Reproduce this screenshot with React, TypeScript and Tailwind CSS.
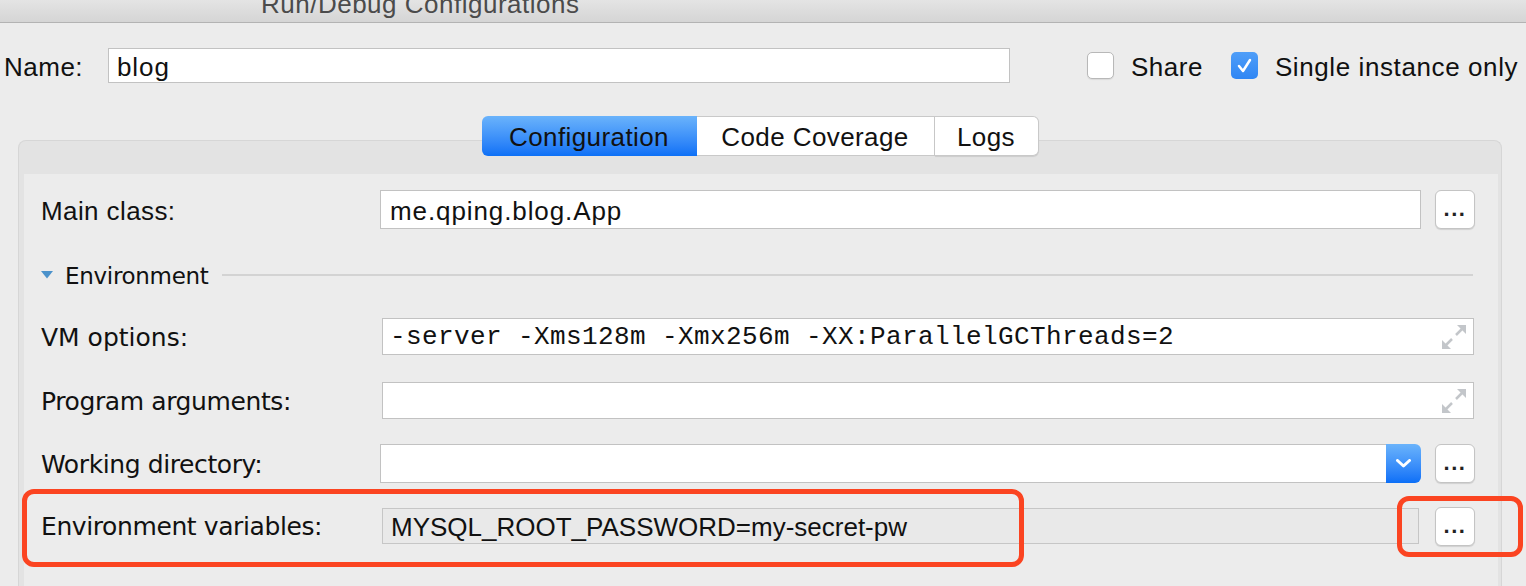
const sf = "font-['Liberation_Sans',Arial,sans-serif]";
const lucida = "font-['DejaVu_Sans',sans-serif] text-[25px] tracking-[-0.4px] text-[#111]";

function DotsButton() {
  return (
    <button className="ml-[14px] flex h-[39px] w-[40px] shrink-0 items-end justify-center rounded-[6px] border border-[#c4c4c4] bg-white pb-[8px] shadow-[0_1px_1px_rgba(0,0,0,0.12)]">
      <span className={`${sf} text-[22px] font-bold leading-none tracking-[1.5px] text-[#222]`}>...</span>
    </button>
  );
}

function ExpandIcon() {
  return (
    <svg width="24" height="24" viewBox="0 0 24 24" className="shrink-0">
      <path d="M24 0 L15 0 L24 9 Z" fill="#c3c6ca" />
      <path d="M20.5 3.5 L14 10" stroke="#c3c6ca" strokeWidth="2.5" />
      <path d="M0 24 L0 15 L9 24 Z" fill="#c3c6ca" />
      <path d="M3.5 20.5 L10 14" stroke="#c3c6ca" strokeWidth="2.5" />
    </svg>
  );
}

function Checkbox({ checked }: { checked?: boolean }) {
  if (checked) {
    return (
      <span className="flex h-[27px] w-[27px] items-center justify-center rounded-[5px] bg-gradient-to-b from-[#4f9ef8] to-[#2f86f4]">
        <svg width="27" height="27" viewBox="0 0 27 27">
          <polyline points="8,14 12,19 19,8" fill="none" stroke="white" strokeWidth="2.5" strokeLinecap="round" strokeLinejoin="round" />
        </svg>
      </span>
    );
  }
  return <span className="h-[27px] w-[27px] rounded-[5px] border border-[#b8b8b8] bg-white shadow-[0_1px_1px_rgba(0,0,0,0.08)]" />;
}

export default function App() {
  return (
    <div className="relative flex h-[586px] w-[1526px] flex-col overflow-hidden bg-[#ececec]">
      {/* window title bar */}
      <div className="h-[23px] shrink-0 overflow-hidden border-b border-[#b3b3b3] bg-gradient-to-b from-[#e4e4e4] to-[#d5d5d5] pl-[261px]">
        <div className={`${sf} -mt-[9px] text-[26px] leading-[26px] tracking-[0.5px] text-[#4b4b4b]`}>
          Run/Debug Configurations
        </div>
      </div>

      {/* name row */}
      <div className={`${sf} mt-[25px] flex h-[35px] shrink-0 items-center text-[26px] tracking-[0.5px] text-[#111]`}>
        <span className="w-[108px] pl-[4px] pt-[3px]">Name:</span>
        <div className="flex h-[35px] w-[902px] items-center border border-[#c2c2c2] bg-white pl-[8px] pt-[3px] tracking-[0.9px]">
          blog
        </div>
        <div className="ml-[77px] flex items-center">
          <Checkbox />
          <span className="ml-[17px] pt-[3px]">Share</span>
          <span className="ml-[28px]">
            <Checkbox checked />
          </span>
          <span className="ml-[17px] pt-[3px] tracking-[0.6px]">Single instance only</span>
        </div>
      </div>

      {/* tabs */}
      <div className="relative z-10 ml-[18px] mt-[33px] flex h-[40px] w-[1484px] shrink-0 justify-center">
        <div className={`${sf} flex h-[40px] text-[26px] tracking-[0.4px] text-[#111]`}>
          <div className="flex w-[215px] items-center justify-center rounded-l-[6px] bg-gradient-to-b from-[#6ab3fb] to-[#0c70f6] pt-[2px]">
            Configuration
          </div>
          <div className="flex w-[238px] items-center justify-center border-y border-r border-[#c9c9c9] bg-white pt-[2px]">
            Code Coverage
          </div>
          <div className="flex w-[104px] items-center justify-center rounded-r-[6px] border-y border-r border-[#c9c9c9] bg-white pt-[2px] shadow-[0_1px_1px_rgba(0,0,0,0.1)]">
            Logs
          </div>
        </div>
      </div>

      {/* tab panel */}
      <div className="-mt-[16px] ml-[18px] flex w-[1484px] flex-1 flex-col rounded-t-[8px] border-x border-t border-[#d6d6d6] bg-[#e3e3e3] pl-[5px] pr-[3px] pt-[33px]">
        <div className="flex flex-1 flex-col bg-[#ececec]">
          {/* main class */}
          <div className="mt-[16px] flex h-[39px] items-center">
            <span className={`${sf} w-[356px] pl-[17px] pt-[3px] text-[26px] tracking-[0.4px] text-[#111]`}>Main class:</span>
            <div className={`${sf} flex h-[39px] w-[1041px] items-center border border-[#c2c2c2] bg-white pl-[9px] pt-[3px] text-[26px] tracking-[0.9px] text-[#111]`}>
              me.qping.blog.App
            </div>
            <DotsButton />
          </div>

          {/* environment section header */}
          <div className="mt-[34px] flex h-[24px] items-center pl-[17px]">
            <svg width="12" height="8" viewBox="0 0 12 8" className="shrink-0">
              <path d="M0 0 L12 0 L6 7.5 Z" fill="#4b92cb" />
            </svg>
            <span className="ml-[12px] pt-[2px] font-['DejaVu_Sans',sans-serif] text-[23px] tracking-[-0.3px] text-[#111]">
              Environment
            </span>
            <div className="ml-[13px] mr-[25px] h-[2px] flex-1 bg-[#d3d3d3]" />
          </div>

          {/* VM options */}
          <div className="mt-[31px] flex h-[37px] items-center">
            <span className={`${lucida} w-[358px] pl-[17px] pt-[2px] tracking-[0px]`}>VM options:</span>
            <div className="flex h-[37px] w-[1092px] items-center justify-between border border-[#c2c2c2] bg-white pl-[7px] pr-[7px]">
              <span className="pt-[2px] font-['Liberation_Mono',monospace] text-[26px] tracking-[0.4px] text-[#111]">
                -server -Xms128m -Xmx256m -XX:ParallelGCThreads=2
              </span>
              <ExpandIcon />
            </div>
          </div>

          {/* program arguments */}
          <div className="mt-[27px] flex h-[37px] items-center">
            <span className={`${lucida} w-[358px] pl-[17px] pt-[2px]`}>Program arguments:</span>
            <div className="flex h-[37px] w-[1092px] items-center justify-end border border-[#c2c2c2] bg-white pr-[7px]">
              <ExpandIcon />
            </div>
          </div>

          {/* working directory */}
          <div className="mt-[25px] flex h-[39px] items-center">
            <span className={`${lucida} w-[356px] pl-[17px] pt-[2px]`}>Working directory:</span>
            <div className="flex h-[39px] w-[1041px]">
              <div className="flex-1 border-y border-l border-[#c2c2c2] bg-white" />
              <div className="flex w-[35px] items-center justify-center rounded-r-[6px] bg-gradient-to-b from-[#6ab3fb] to-[#0a6ff7]">
                <svg width="15" height="9" viewBox="0 0 15 9">
                  <polyline points="1.5,1.5 7.5,7 13.5,1.5" fill="none" stroke="white" strokeWidth="3" strokeLinecap="round" strokeLinejoin="round" />
                </svg>
              </div>
            </div>
            <DotsButton />
          </div>

          {/* environment variables */}
          <div className="mt-[24px] flex h-[38px] items-center">
            <span className={`${lucida} w-[358px] pl-[17px] pt-[2px]`}>Environment variables:</span>
            <div className={`${sf} flex h-[36px] w-[1037px] items-center border border-[#c6c6c6] bg-[#e9e9e9] pl-[8px] pt-[3px] text-[26px] text-[#111]`}>
              MYSQL_ROOT_PASSWORD=my-secret-pw
            </div>
            <span className="ml-[2px]">
              <DotsButton />
            </span>
          </div>
        </div>
      </div>

      {/* red annotation frames drawn over the screenshot */}
      <div className="pointer-events-none absolute left-[22px] top-[489px] h-[78px] w-[1002px] rounded-[12px] border-[5px] border-[#fb4421]" />
      <div className="pointer-events-none absolute left-[1397px] top-[496px] h-[61px] w-[126px] rounded-[12px] border-[5px] border-[#fb4421]" />
    </div>
  );
}
